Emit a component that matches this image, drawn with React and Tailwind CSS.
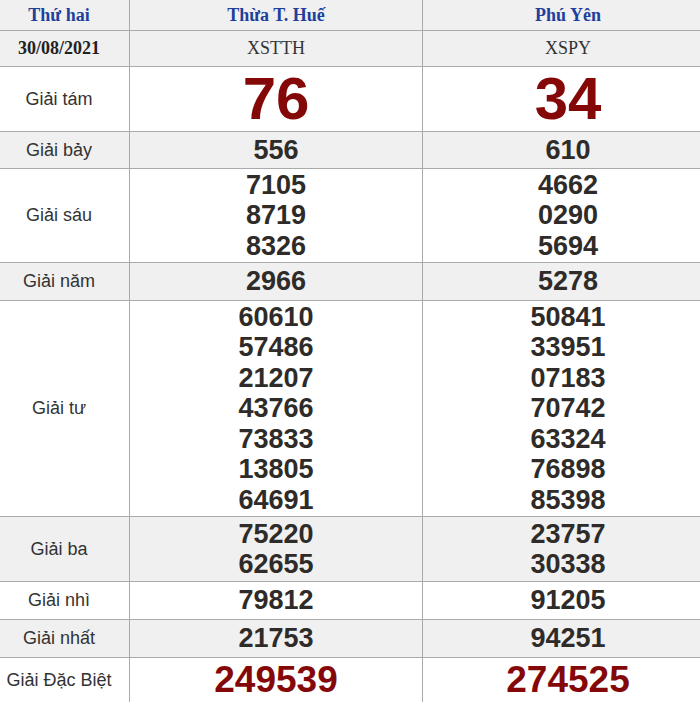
import React from 'react';

const rows = [
    { label: 'Giải tám', h: 'h-[65px]', gray: false, big: true, a: ['76'], b: ['34'] },
    { label: 'Giải bảy', h: 'h-[37px]', gray: true, a: ['556'], b: ['610'] },
    { label: 'Giải sáu', h: 'h-[94px]', gray: false, a: ['7105', '8719', '8326'], b: ['4662', '0290', '5694'] },
    { label: 'Giải năm', h: 'h-[38px]', gray: true, a: ['2966'], b: ['5278'] },
    {
        label: 'Giải tư', h: 'h-[216px]', gray: false,
        a: ['60610', '57486', '21207', '43766', '73833', '13805', '64691'],
        b: ['50841', '33951', '07183', '70742', '63324', '76898', '85398'],
    },
    { label: 'Giải ba', h: 'h-[65px]', gray: true, a: ['75220', '62655'], b: ['23757', '30338'] },
    { label: 'Giải nhì', h: 'h-[38px]', gray: false, a: ['79812'], b: ['91205'] },
    { label: 'Giải nhất', h: 'h-[38px]', gray: true, a: ['21753'], b: ['94251'] },
    { label: 'Giải Đặc Biệt', h: 'h-[44px]', gray: false, special: true, a: ['249539'], b: ['274525'] },
];

const Numbers = ({ list, big, special }) => {
    if (big) {
        return <span className="text-[60px] leading-[60px] font-bold text-[#850808]">{list[0]}</span>;
    }
    if (special) {
        return <span className="text-[37px] leading-[40px] font-bold text-[#850808]">{list[0]}</span>;
    }
    return (
        <div className="flex flex-col items-center">
            {list.map((n) => (
                <span key={n} className="text-[27px] leading-[30.5px] font-bold text-[#2e2b28]">{n}</span>
            ))}
        </div>
    );
};

const App = () => {
    return (
        <div className="w-[700px] h-[702px] overflow-hidden bg-white font-['Liberation_Sans',Arial,sans-serif]">
            <div className="w-[713px]">
                {/* Header */}
                <div className="flex h-[31px] bg-[#f0f0f0] border-b border-[#aaaaaa] font-['Liberation_Serif','Times_New_Roman',serif] font-bold text-[18px] text-[#1e3f9c]">
                    <div className="w-[130px] pr-[11px] border-r border-[#aaaaaa] flex items-center justify-center">Thứ hai</div>
                    <div className="w-[293px] border-r border-[#aaaaaa] flex items-center justify-center">Thừa T. Huế</div>
                    <div className="flex-1 flex items-center justify-center">Phú Yên</div>
                </div>

                {/* Date / codes */}
                <div className="flex h-[36px] bg-[#f0f0f0] border-b border-[#aaaaaa] font-['Liberation_Serif','Times_New_Roman',serif] text-[18px] text-[#333333]">
                    <div className="w-[130px] pr-[11px] border-r border-[#aaaaaa] flex items-center justify-center font-bold text-[#222222]">30/08/2021</div>
                    <div className="w-[293px] border-r border-[#aaaaaa] flex items-center justify-center">XSTTH</div>
                    <div className="flex-1 flex items-center justify-center">XSPY</div>
                </div>

                {rows.map((r) => (
                    <div
                        key={r.label}
                        className={`flex ${r.h} ${r.special ? '' : 'border-b border-[#aaaaaa]'} ${r.gray ? 'bg-[#f0f0f0]' : 'bg-white'}`}
                    >
                        <div className="w-[130px] pr-[11px] border-r border-[#aaaaaa] flex items-center justify-center text-[18px] text-[#333333] whitespace-nowrap">
                            {r.label}
                        </div>
                        <div className="w-[293px] border-r border-[#aaaaaa] flex items-center justify-center">
                            <Numbers list={r.a} big={r.big} special={r.special} />
                        </div>
                        <div className="flex-1 flex items-center justify-center">
                            <Numbers list={r.b} big={r.big} special={r.special} />
                        </div>
                    </div>
                ))}
            </div>
        </div>
    );
};

export default App;
